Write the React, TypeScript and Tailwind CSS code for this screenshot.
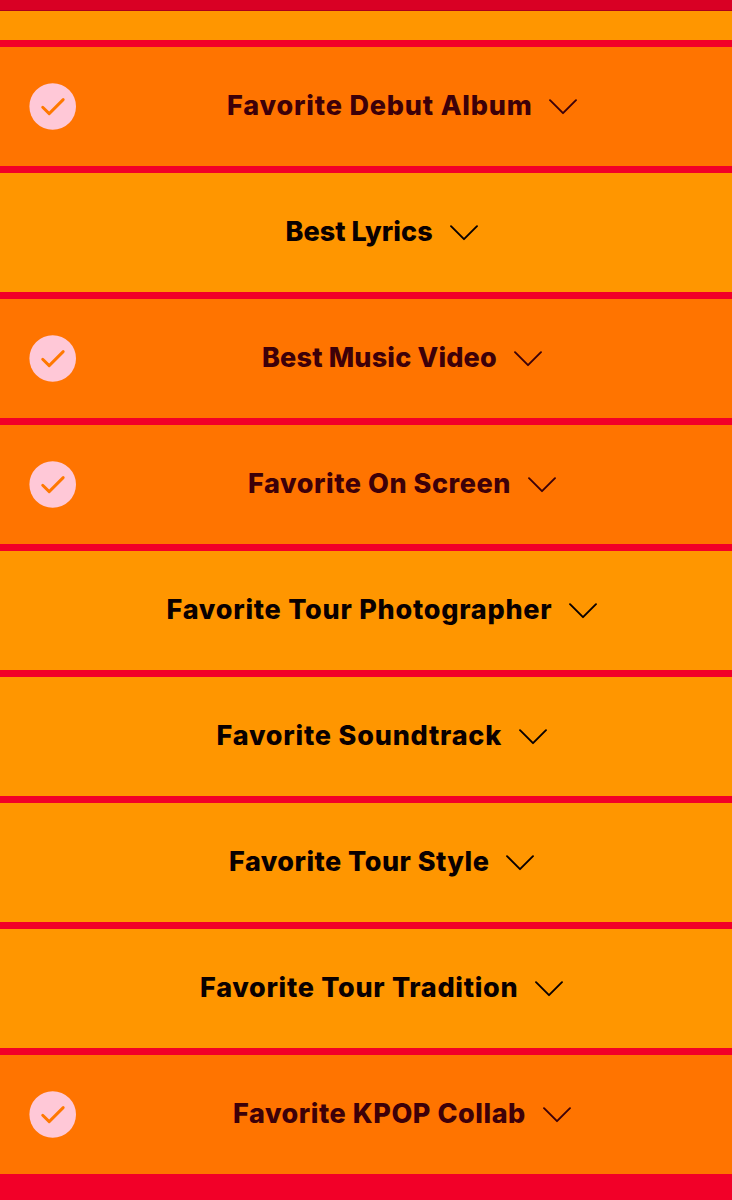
import clsx from 'clsx';

type Category = {
  title: string;
  voted?: boolean;
  // width of the title box plus the tracking that fills it
  fit: string;
};

const categories: Category[] = [
  { title: 'Favorite Debut Album', voted: true, fit: 'w-[305px] tracking-[0.83px]' },
  { title: 'Best Lyrics', fit: 'w-[147px] tracking-[0.05px]' },
  { title: 'Best Music Video', voted: true, fit: 'w-[235px] tracking-[0.17px]' },
  { title: 'Favorite On Screen', voted: true, fit: 'w-[263px] tracking-[0.56px]' },
  { title: 'Favorite Tour Photographer', fit: 'w-[385px] tracking-[0.75px]' },
  { title: 'Favorite Soundtrack', fit: 'w-[285px] tracking-[0.79px]' },
  { title: 'Favorite Tour Style', fit: 'w-[260px] tracking-[0.46px]' },
  { title: 'Favorite Tour Tradition', fit: 'w-[318px] tracking-[0.69px]' },
  { title: 'Favorite KPOP Collab', voted: true, fit: 'w-[293px] tracking-[0.54px]' },
];

function CheckBadge() {
  return (
    <svg width="47" height="47" viewBox="0 0 47 47" fill="none" className="shrink-0">
      <circle cx="23.7" cy="23.5" r="23.3" fill="#ffc8d7" />
      <path d="M13.7 24.2L20.2 30.6L34.2 16.6" stroke="#ff7800" strokeWidth="2.9" strokeLinecap="round" strokeLinejoin="round" />
    </svg>
  );
}

function Chevron() {
  return (
    <svg width="28" height="16" viewBox="0 0 28 16" fill="none" className="shrink-0">
      <path d="M1 1.2L14 14.2L27 1.2" stroke="currentColor" strokeWidth="1.9" strokeLinecap="round" strokeLinejoin="round" />
    </svg>
  );
}

function CategoryRow({ title, voted, fit }: Category) {
  return (
    <button
      className={clsx(
        'flex h-[119px] w-full shrink-0 items-center',
        voted ? 'bg-[#ff7400] pl-[29px] text-[#3d0009]' : 'bg-[#ff9600] pl-[31px] text-[#0a0000]'
      )}
    >
      {voted && <CheckBadge />}
      <span className={clsx('flex flex-1 items-center justify-center gap-[17px]', voted && 'pr-1')}>
        <span className={clsx('pb-0.5 text-left text-[27px] leading-[40px] font-extrabold whitespace-nowrap', fit)}>{title}</span>
        <Chevron />
      </span>
    </button>
  );
}

export default function App() {
  return (
    <div className="flex h-[1200px] w-[732px] flex-col overflow-hidden bg-[#f20028] font-['Inter',sans-serif]">
      <div className="h-[11px] shrink-0 border-b border-[#aa001c] bg-[#d90024]" />
      <div className="h-[29px] shrink-0 bg-[#ff9600]" />
      <div className="mt-[7px] flex flex-col gap-[7px]">
        {categories.map((category) => (
          <CategoryRow key={category.title} {...category} />
        ))}
      </div>
    </div>
  );
}
